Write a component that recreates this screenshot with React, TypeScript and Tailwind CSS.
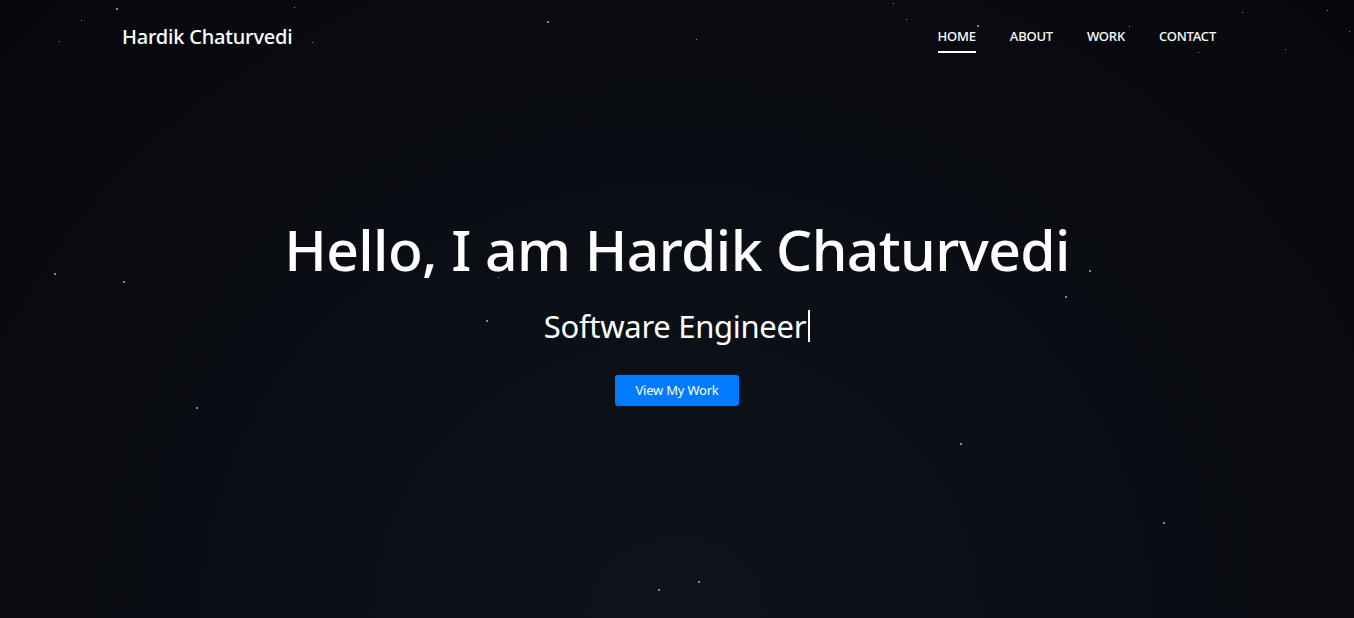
import React from "react";

const stars: [number, number, number][] = [
  [116, 8, 2], [294, 7, 1], [547, 21, 2], [696, 39, 1], [893, 3, 1], [906, 19, 1],
  [977, 25, 2], [1242, 12, 1], [1285, 49, 1], [1327, 10, 1], [1349, 31, 1], [1198, 52, 1],
  [59, 41, 1], [81, 20, 1], [312, 42, 1], [54, 273, 2], [123, 281, 2], [498, 277, 1],
  [1089, 270, 2], [1065, 296, 2], [486, 320, 2], [196, 407, 2], [960, 443, 2],
  [1163, 522, 2], [698, 581, 2], [658, 589, 2], [1129, 26, 1],
];

const navItems = ["HOME", "ABOUT", "WORK", "CONTACT"];

export default function App() {
  return (
    <div
      className="relative w-full h-[618px] overflow-hidden bg-[radial-gradient(ellipse_at_bottom,#0e131c_0%,#07080c_100%)] text-white"
      style={{ fontFamily: '"Noto Sans", "Open Sans", sans-serif' }}
    >
      {stars.map(([x, y, s], i) => (
        <span
          key={i}
          className="absolute bg-[#8a8a8a]"
          style={{ left: x, top: y, width: s, height: s }}
        />
      ))}

      <header className="relative max-w-[1140px] mx-auto px-[15px] flex items-center justify-between h-[74px]">
        <div className="text-[20px] font-medium tracking-[-0.2px]">Hardik Chaturvedi</div>
        <nav className="flex items-center">
          {navItems.map((item, i) => (
            <a key={item} className="relative px-[17px] last:pr-4 text-[13px] font-medium tracking-[-0.2px] cursor-pointer">
              {item}
              {i === 0 && (
                <span className="absolute left-[17px] right-[17px] -bottom-[6px] h-[2px] bg-white" />
              )}
            </a>
          ))}
        </nav>
      </header>

      <section className="relative flex flex-col items-center pt-[147px]">
        <h1 className="text-[57px] font-medium leading-none tracking-[-0.6px]">
          Hello, I am Hardik Chaturvedi
        </h1>
        <p className="mt-[32px] flex items-center text-[31px] leading-none tracking-[-0.3px]">
          Software Engineer
          <span className="inline-block w-[2px] h-[32px] bg-white ml-[2px]" />
        </p>
        <button className="mt-[33px] h-[31px] px-[20px] bg-[#007bff] rounded-[3px] text-[13px] tracking-[-0.2px]">
          View My Work
        </button>
      </section>
    </div>
  );
}
